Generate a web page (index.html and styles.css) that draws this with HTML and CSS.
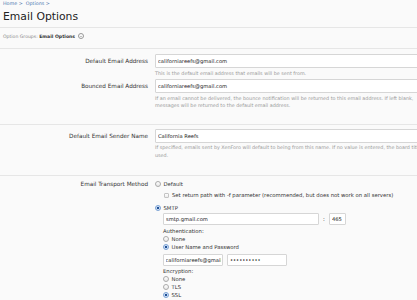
FILE: index.html
```html
<!DOCTYPE html>
<html lang="en">
<head>
    <meta charset="UTF-8">
    <title>Email Options</title>
    <link rel="stylesheet" href="styles.css">
</head>
<body>
    <div class="page-head">
        <div class="crumbs"><a href="#">Home</a> &gt; &nbsp;<a href="#">Options</a> &gt;</div>
        <h1 class="title">Email Options</h1>
    </div>

    <div class="groups">
        Option Groups: <b>Email Options</b> <span class="menu-btn"></span>
    </div>

    <form class="options">
        <div class="section first">
            <div class="row">
                <label class="label">Default Email Address</label>
                <div class="field">
                    <input class="textbox wide" type="text" value="californiareefs@gmail.com">
                    <p class="explain">This is the default email address that emails will be sent from.</p>
                </div>
            </div>
            <div class="row">
                <label class="label">Bounced Email Address</label>
                <div class="field">
                    <input class="textbox wide" type="text" value="californiareefs@gmail.com">
                    <p class="explain">If an email cannot be delivered, the bounce notification will be returned to this email address. If left blank, messages will be returned to the default email address.</p>
                </div>
            </div>
        </div>

        <div class="section">
            <div class="row">
                <label class="label">Default Email Sender Name</label>
                <div class="field">
                    <input class="textbox wide" type="text" value="California Reefs">
                    <p class="explain">If specified, emails sent by XenForo will default to being from this name. If no value is entered, the board title will be used.</p>
                </div>
            </div>
        </div>

        <div class="section">
            <div class="row">
                <label class="label transport">Email Transport Method</label>
                <div class="field">
                    <div class="choice"><span class="radio"></span>Default</div>
                    <div class="choice sub"><span class="check"></span>Set return path with -f parameter (recommended, but does not work on all servers)</div>
                    <div class="choice"><span class="radio on"></span>SMTP</div>
                    <div class="nested">
                        <div class="host-line">
                            <input class="textbox host" type="text" value="smtp.gmail.com">
                            <span class="colon">:</span>
                            <input class="textbox port" type="text" value="465">
                        </div>
                        <div class="caption">Authentication:</div>
                        <div class="choice"><span class="radio"></span>None</div>
                        <div class="choice"><span class="radio on"></span>User Name and Password</div>
                        <div class="login-line">
                            <input class="textbox user" type="text" value="californiareefs@gmail.com">
                            <input class="textbox pass" type="password" value="xxxxxxxxxx">
                        </div>
                        <div class="caption">Encryption:</div>
                        <div class="choice"><span class="radio"></span>None</div>
                        <div class="choice"><span class="radio"></span>TLS</div>
                        <div class="choice"><span class="radio on"></span>SSL</div>
                    </div>
                </div>
            </div>
        </div>
    </form>
</body>
</html>
```

FILE: styles.css
```css
body {
    margin: 0;
    background-color: #fafafa;
    font-family: "DejaVu Sans", Verdana, sans-serif;
    color: #2f2f2f;
    overflow: hidden;
}

.page-head {
    padding: 1px 3px 3px;
    border-bottom: 1px solid #e6e6e6;
}

.crumbs {
    font-size: 4.8px;
    line-height: 6px;
    color: #5a7fb0;
}

.crumbs a {
    color: #4d77b0;
    text-decoration: none;
}

.title {
    margin: 3px 0 0;
    font-size: 10.8px;
    line-height: 14px;
    font-weight: normal;
    color: #222;
}

.groups {
    padding: 5px 3px 8px;
    font-size: 4.6px;
    line-height: 7px;
    color: #888;
    border-bottom: 1px solid #e6e6e6;
}

.groups b {
    color: #333;
}

.menu-btn {
    display: inline-block;
    width: 4px;
    height: 4px;
    border: 0.6px solid #999;
    border-radius: 50%;
    vertical-align: middle;
    margin-left: 1px;
    position: relative;
    top: -0.5px;
}

.menu-btn::after {
    content: "";
    position: absolute;
    left: 1px;
    top: 1.4px;
    border-left: 1px solid transparent;
    border-right: 1px solid transparent;
    border-top: 1.2px solid #888;
}

.section {
    padding: 4px 0 16px;
    border-bottom: 1px solid #e6e6e6;
}

.section.first {
    padding: 5px 0 14px;
}

.row {
    display: grid;
    grid-template-columns: 148px 1fr;
    column-gap: 7px;
    margin-bottom: 2px;
}

.row:last-child {
    margin-bottom: 0;
}

.label {
    text-align: right;
    font-size: 5.7px;
    line-height: 14px;
    color: #333;
}

.label.transport {
    line-height: 8px;
}

.field {
    min-width: 0;
    font-size: 5.3px;
    line-height: 8px;
}

.textbox {
    display: block;
    box-sizing: border-box;
    height: 14px;
    margin: 0;
    padding: 0 2px;
    border: 1px solid #d6d6d6;
    border-radius: 1px;
    background-color: #fff;
    font-family: "DejaVu Sans", Verdana, sans-serif;
    font-size: 5.2px;
    color: #222;
    outline: none;
}

.textbox.wide {
    width: 280px;
}

.explain {
    margin: 1.5px 0 0;
    font-size: 4.85px;
    line-height: 7.5px;
    color: #999;
    width: 284px;
}

.choice {
    font-size: 5.3px;
    line-height: 8px;
    color: #333;
    display: flex;
    align-items: center;
}

.choice.sub {
    padding: 3px 0 5px 9px;
}

.radio {
    box-sizing: border-box;
    width: 6px;
    height: 6px;
    margin-right: 2.5px;
    border: 0.6px solid #aaa;
    border-radius: 50%;
    background: linear-gradient(#fff, #e8e8e8);
    flex: none;
}

.radio.on {
    border-color: #7aa2d4;
    background: radial-gradient(circle, #1f4f95 0, #1f4f95 1.1px, #cfe0f5 1.5px);
}

.check {
    box-sizing: border-box;
    width: 5px;
    height: 5px;
    margin-right: 3px;
    border: 0.6px solid #c4c4c4;
    border-radius: 1px;
    background: linear-gradient(#fff, #ececec);
    flex: none;
}

.nested {
    padding-left: 8px;
}

.host-line {
    display: flex;
    align-items: center;
    margin: 1px 0 2.5px;
}

.textbox.host {
    width: 156px;
    height: 12px;
}

.colon {
    font-size: 5.3px;
    width: 10px;
    text-align: center;
}

.textbox.port {
    width: 17px;
    height: 12px;
}

.caption {
    font-size: 5.3px;
    line-height: 7px;
    color: #333;
}

.login-line {
    display: flex;
    gap: 4px;
    margin: 3px 0 2.5px;
}

.textbox.user {
    width: 60px;
    height: 12px;
    padding: 0 1.5px;
}

.textbox.pass {
    width: 60px;
    height: 12px;
}
```
